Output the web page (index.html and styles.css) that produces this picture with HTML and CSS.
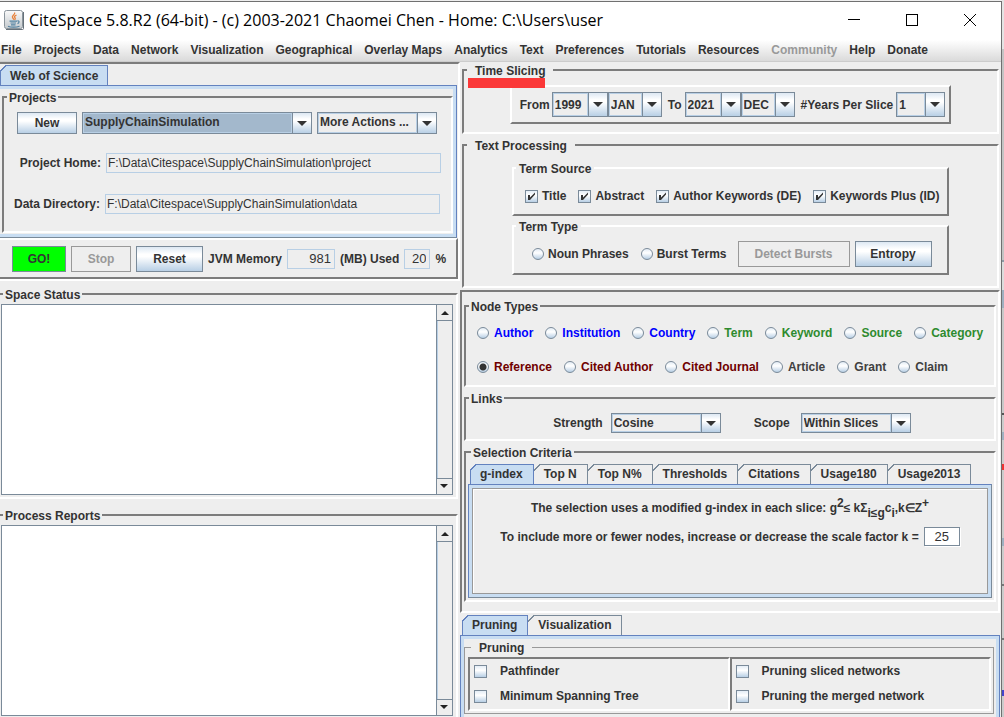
FILE: index.html
```html
<!DOCTYPE html>
<html lang="en">
<head>
<meta charset="utf-8">
<title>CiteSpace 5.8.R2 (64-bit)</title>
<link rel="stylesheet" href="styles.css">
</head>
<body>
<div class="window">
  <header class="titlebar">
    <svg class="app-icon" width="20" height="20" viewBox="0 0 20 20" aria-hidden="true">
      <defs><linearGradient id="tile" x1="0" y1="0" x2="0" y2="1"><stop offset="0" stop-color="#fafafa"/><stop offset="1" stop-color="#c4cace"/></linearGradient></defs>
      <rect x=".5" y=".5" width="18" height="18" rx="2" fill="url(#tile)" stroke="#8b959c"/>
      <path d="M19.5 2v16.500q0 1-1 1H2" fill="none" stroke="#66717a"/>
      <path d="M10.500 2.500c1.500 2-3.200 3-2 5 .5.900 1.500 1.200 1 2.300M12.500 5c-2 1-2.600 1.800-1.600 2.800.7.700.3 1.500-.4 2" fill="none" stroke="#e8813a" stroke-width="1.300"/>
      <path d="M5.500 11.200h7.500M6.500 13h5.500M7 14.800h4.500M4 16.200c2.500 1.200 8.500 1.200 11.500 0M13.300 11c2.200-.6 2.400 1.800.2 2.600" fill="none" stroke="#5382a1" stroke-width="1.200"/>
    </svg>
    <h1 class="title">CiteSpace 5.8.R2 (64-bit) - (c) 2003-2021 Chaomei Chen - Home: C:\Users\user</h1>
    <div class="window-buttons">
      <button class="window-button" aria-label="Minimize"><svg width="12" height="12"><path d="M0 5.500h12" stroke="#000"/></svg></button>
      <button class="window-button" aria-label="Maximize"><svg width="12" height="12"><rect x=".5" y=".5" width="11" height="11" fill="none" stroke="#000"/></svg></button>
      <button class="window-button" aria-label="Close"><svg width="12" height="12"><path d="M0 0l12 12M12 0L0 12" stroke="#000"/></svg></button>
    </div>
  </header>
  <nav class="menubar">
    <button>File</button><button>Projects</button><button>Data</button><button>Network</button><button>Visualization</button><button>Geographical</button><button>Overlay Maps</button><button>Analytics</button><button>Text</button><button>Preferences</button><button>Tutorials</button><button>Resources</button><button disabled>Community</button><button>Help</button><button>Donate</button>
  </nav>
  <main class="content">
    <section class="left">
      <div class="source-panel">
        <div class="tabs" role="tablist"><button class="tab active" role="tab">Web of Science</button></div>
        <div class="tab-body">
          <fieldset class="group projects">
            <legend>Projects</legend>
            <div class="project-actions">
              <button class="button new">New</button>
              <select class="combo project-select" aria-label="Project"><option>SupplyChainSimulation</option></select>
              <select class="combo more-select" aria-label="More actions"><option>More Actions ...</option></select>
            </div>
            <div class="path-row"><label for="home">Project Home:</label><input class="field" id="home" readonly value="F:\Data\Citespace\SupplyChainSimulation\project"></div>
            <div class="path-row"><label for="dir">Data Directory:</label><input class="field" id="dir" readonly value="F:\Data\Citespace\SupplyChainSimulation\data"></div>
          </fieldset>
        </div>
        <div class="run-bar">
          <button class="button go">GO!</button>
          <button class="button stop" disabled>Stop</button>
          <button class="button reset">Reset</button>
          <label for="mem">JVM Memory</label><input class="field num mem" id="mem" readonly value="981">
          <label for="used">(MB) Used</label><input class="field num used" id="used" readonly value="20"><span>%</span>
        </div>
      </div>
      <fieldset class="group log">
        <legend>Space Status</legend>
        <div class="log-box">
          <textarea aria-label="Space Status"></textarea>
          <div class="scrollbar"><button class="arrow up" aria-label="Scroll up"></button><button class="arrow down" aria-label="Scroll down"></button></div>
        </div>
      </fieldset>
      <fieldset class="group log">
        <legend>Process Reports</legend>
        <div class="log-box">
          <textarea aria-label="Process Reports"></textarea>
          <div class="scrollbar"><button class="arrow up" aria-label="Scroll up"></button><button class="arrow down" aria-label="Scroll down"></button></div>
        </div>
      </fieldset>
    </section>
    <section class="right">
      <fieldset class="group wide-legend time">
        <legend><span class="marked">Time Slicing</span></legend>
        <div class="slice-bar">
          <span class="lead">From</span>
          <select class="combo year" aria-label="From year"><option>1999</option></select>
          <select class="combo month" aria-label="From month"><option>JAN</option></select>
          <span class="mid">To</span>
          <select class="combo year" aria-label="To year"><option>2021</option></select>
          <select class="combo month" aria-label="To month"><option>DEC</option></select>
          <label class="mid" for="per">#Years Per Slice</label>
          <select class="combo per" id="per"><option>1</option></select>
        </div>
      </fieldset>
      <fieldset class="group wide-legend text-processing">
        <legend>Text Processing</legend>
        <fieldset class="group raised term-source">
          <legend>Term Source</legend>
          <div class="choices">
            <label><input type="checkbox" checked>Title</label>
            <label><input type="checkbox" checked>Abstract</label>
            <label><input type="checkbox" checked>Author Keywords (DE)</label>
            <label><input type="checkbox" checked>Keywords Plus (ID)</label>
          </div>
        </fieldset>
        <fieldset class="group raised term-type">
          <legend>Term Type</legend>
          <div class="type-row">
            <div class="choices">
              <label><input type="radio" name="type">Noun Phrases</label>
              <label><input type="radio" name="type">Burst Terms</label>
            </div>
            <button class="button detect" disabled>Detect Bursts</button>
            <button class="button entropy">Entropy</button>
          </div>
        </fieldset>
      </fieldset>
      <div class="network-panel">
        <fieldset class="group nodes">
          <legend>Node Types</legend>
          <div class="choices">
            <label class="blue"><input type="radio" name="node">Author</label>
            <label class="blue"><input type="radio" name="node">Institution</label>
            <label class="blue"><input type="radio" name="node">Country</label>
            <label class="green"><input type="radio" name="node">Term</label>
            <label class="green"><input type="radio" name="node">Keyword</label>
            <label class="green"><input type="radio" name="node">Source</label>
            <label class="green"><input type="radio" name="node">Category</label>
          </div>
          <div class="choices">
            <label class="maroon"><input type="radio" name="node" checked>Reference</label>
            <label class="maroon"><input type="radio" name="node">Cited Author</label>
            <label class="maroon"><input type="radio" name="node">Cited Journal</label>
            <label class="gray"><input type="radio" name="node">Article</label>
            <label class="gray"><input type="radio" name="node">Grant</label>
            <label class="gray"><input type="radio" name="node">Claim</label>
          </div>
        </fieldset>
        <fieldset class="group links">
          <legend>Links</legend>
          <div class="links-row">
            <div class="pair"><label for="strength">Strength</label><select class="combo" id="strength"><option>Cosine</option></select></div>
            <div class="pair scope"><label for="scope">Scope</label><select class="combo" id="scope"><option>Within Slices</option></select></div>
          </div>
        </fieldset>
        <fieldset class="group criteria">
          <legend>Selection Criteria</legend>
          <div class="tabs" role="tablist">
            <button class="tab active" role="tab">g-index</button><button class="tab" role="tab">Top N</button><button class="tab" role="tab">Top N%</button><button class="tab" role="tab">Thresholds</button><button class="tab" role="tab">Citations</button><button class="tab" role="tab">Usage180</button><button class="tab" role="tab">Usage2013</button>
          </div>
          <div class="tab-body criteria-body">
            <div class="criteria-inner">
              <p class="formula">The selection uses a modified g-index in each slice: g<sup>2</sup>≤ kΣ<sub>i≤g</sub>c<sub>i</sub>,k∈Z<sup>+</sup></p>
              <p class="factor"><label for="k">To include more or fewer nodes, increase or decrease the scale factor k =</label><input class="k" id="k" value="25"></p>
            </div>
          </div>
        </fieldset>
      </div>
      <div class="pruning-panel">
        <div class="tabs" role="tablist"><button class="tab active" role="tab">Pruning</button><button class="tab" role="tab">Visualization</button></div>
        <div class="tab-body pruning-body">
          <fieldset class="group etched wide-legend">
            <legend>Pruning</legend>
            <div class="pruning-grid">
              <div class="pruning-cell">
                <label><input type="checkbox">Pathfinder</label>
                <label><input type="checkbox">Minimum Spanning Tree</label>
              </div>
              <div class="pruning-cell">
                <label><input type="checkbox">Pruning sliced networks</label>
                <label><input type="checkbox">Pruning the merged network</label>
              </div>
            </div>
          </fieldset>
        </div>
      </div>
    </section>
  </main>
</div>
<div class="backdrop"></div>
</body>
</html>
```
FILE: styles.css
```css
* { box-sizing: border-box; }

:root {
  --face: #eee;
  --line: #7a8a99;
  --blue-line: #6382bf;
  --soft: #b8cfe5;
  --tab: #c8ddf2;
  --shade: #7c7c7c;
  --steel: linear-gradient(#dde8f3 0, #fff 30%, #fff 40%, #b8cfe5 100%);
}

body {
  display: flex;
  height: 100vh;
  margin: 0;
  overflow: hidden;
  background: var(--face);
  color: #333;
  font: bold 12px/14px "Liberation Sans", Arial, sans-serif;
}

button, input, select, textarea { font: inherit; color: inherit; margin: 0; border-radius: 0; }
p { margin: 0; }

.window {
  display: flex;
  flex: 1;
  flex-direction: column;
  min-width: 0;
  border-top: 1px solid #707070;
  border-right: 1px solid #707070;
  margin-top: 1px;
}

.backdrop {
  width: 2px;
  background: linear-gradient(#e4e4e4 0 49px, #c4c4c4 49px 260px, #8d9aa5 260px 262px, #dcdcdc 262px 290px, #9fb0c0 290px 308px, #c8c8c8 308px 413px, #555 413px 415px, #ccc 415px 432px, #9fb0c0 432px 440px, #ccc 440px 464px, #e33 464px 470px, #ccc 470px 538px, #9fb0c0 538px 546px, #ccc 546px 584px, #777 584px 586px, #ccc 586px 638px, #777 638px 640px, #ccc 640px 690px, #44c 690px 696px, #ccc 696px 100%);
}

/* Title bar and menus */
.titlebar {
  display: flex;
  align-items: center;
  height: 38px;
  padding: 0 2px 2px 4px;
  background: #fff;
}
.app-icon { flex: none; }
.title {
  flex: 1;
  margin: 0 0 0 5px;
  color: #000;
  font: 16px/20px "Open Sans", sans-serif;
  white-space: nowrap;
}
.window-buttons { display: flex; }
.window-button {
  display: flex;
  align-items: center;
  justify-content: center;
  width: 58px;
  height: 36px;
  padding: 0;
  border: 0;
  background: none;
}
.menubar {
  display: flex;
  gap: 12px;
  height: 22px;
  padding: 0 1px 2px;
  border-bottom: 1px solid #ccc;
  background: linear-gradient(#fff, #dadada);
}
.menubar button { padding: 0; border: 0; background: none; white-space: nowrap; }
.menubar button:disabled { color: #999; }

/* Shared controls */
.button {
  flex: none;
  height: 26px;
  padding: 0;
  border: 1px solid var(--line);
  background: var(--steel);
}
.button:disabled { border-color: #999; background: var(--face); color: #999; }

.combo {
  appearance: none;
  flex: none;
  height: 20px;
  padding: 0 18px 0 2px;
  border: 1px solid var(--line);
  outline: 0;
  background:
    url("data:image/svg+xml,%3Csvg xmlns='http://www.w3.org/2000/svg' width='10' height='5'%3E%3Cpath d='M0 0h10L5 5z' fill='%23333'/%3E%3C/svg%3E") right 4px center no-repeat,
    linear-gradient(var(--line), var(--line)) right 18px top / 1px 100% no-repeat,
    var(--steel) right top / 18px 100% no-repeat,
    linear-gradient(var(--fill, #eee), var(--fill, #eee)) 1px 1px / calc(100% - 21px) calc(100% - 2px) no-repeat,
    var(--soft);
}

.field {
  height: 20px;
  min-width: 0;
  padding: 0 1px;
  border: 1px solid var(--soft);
  outline: 0;
  background: var(--face);
  font-weight: normal;
}
.num { text-align: right; padding-right: 3px; font-size: 13px; }

input[type="checkbox"], input[type="radio"] {
  appearance: none;
  flex: none;
  width: 13px;
  height: 13px;
  border: 1px solid var(--line);
  background: linear-gradient(#e4edf6, #fff 40%, #b8cfe5);
}
input[type="radio"] { width: 12px; height: 12px; border-radius: 50%; }
input[type="checkbox"]:checked {
  background:
    url("data:image/svg+xml,%3Csvg xmlns='http://www.w3.org/2000/svg' width='11' height='11'%3E%3Cpath d='M2 4h2v2.500L9 1.500v2L4 9H2z' fill='%23333'/%3E%3C/svg%3E") center no-repeat,
    linear-gradient(#e4edf6, #fff 40%, #b8cfe5);
}
input[type="radio"]:checked { background: radial-gradient(#333 0 3px, transparent 4px), linear-gradient(#e4edf6, #fff 40%, #b8cfe5); }

.group {
  min-width: 0;
  margin: 0;
  padding: 0;
  border: 2px solid;
  border-color: var(--shade) #fff #fff var(--shade);
}
.group > legend { margin-left: 3px; padding: 2px 2px 0; }
.wide-legend > legend { padding: 2px 8px 0; }
.raised { border-color: #fff var(--shade) var(--shade) #fff; }
.etched { border: 1px solid #999; }

.choices { display: flex; gap: 12px; white-space: nowrap; }
.choices label { display: flex; align-items: center; gap: 4px; }
.blue { color: #00f; }
.green { color: #2e8b2e; }
.maroon { color: #700000; }
.gray { color: #404040; }

/* Tabs */
.tabs { display: flex; }
.tab {
  --edge: var(--line);
  --surface: var(--face);
  height: 20px;
  padding: 0 11px 0 10px;
  border: 0;
  background:
    linear-gradient(135deg, var(--face) 0 4px, var(--edge) 4px 5px, transparent 5px) 0 0 / 7px 7px no-repeat,
    linear-gradient(var(--edge), var(--edge)) 0 0 / 100% 1px no-repeat,
    linear-gradient(var(--edge), var(--edge)) 100% 0 / 1px 100% no-repeat,
    var(--surface);
  white-space: nowrap;
}
.tab.active {
  --edge: var(--blue-line);
  --surface: var(--tab);
  background:
    linear-gradient(135deg, var(--face) 0 4px, var(--edge) 4px 5px, transparent 5px) 0 0 / 7px 7px no-repeat,
    linear-gradient(var(--edge), var(--edge)) 0 0 / 100% 1px no-repeat,
    linear-gradient(var(--edge), var(--edge)) 0 0 / 1px 100% no-repeat,
    linear-gradient(var(--edge), var(--edge)) 100% 0 / 1px 100% no-repeat,
    var(--surface);
}
.tab-body {
  padding: 3px;
  border: 1px solid var(--blue-line);
  background: linear-gradient(var(--face), var(--face)) content-box, var(--tab);
}

/* Columns */
.content {
  display: grid;
  flex: 1;
  grid-template-columns: 460fr 541fr;
  min-height: 0;
}
.left, .right { display: flex; flex-direction: column; min-width: 0; }

.source-panel {
  border: 2px solid;
  border-color: var(--shade) #fff #fff;
  border-left: 0;
  padding-top: 1px;
}
.source-panel .tab { padding: 1px 10px 0; }
.source-panel .tab-body { padding-left: 0; border-left: 0; border-bottom-color: var(--line); margin-right: 1px; }
.projects { height: 144px; margin: 0 0 1px 2px; }
.project-actions { display: flex; gap: 5px; padding: 7px 14px 0 13px; }
.project-actions .button, .project-actions .combo { height: 22px; }
.new { width: 60px; }
.project-select { --fill: #a3b8cc; flex: 1; min-width: 0; padding-bottom: 2px; }
.more-select { width: 120px; padding-bottom: 2px; }
.path-row { display: flex; align-items: center; gap: 5px; padding: 19px 10px 0 13px; }
.path-row + .path-row { padding: 21px 11px 0 9px; }
.path-row .field { flex: 1; }
.path-row label { width: 84px; text-align: right; white-space: nowrap; }
.path-row + .path-row label { width: 87px; }

.run-bar {
  display: flex;
  align-items: center;
  gap: 5px;
  height: 41px;
  padding-left: 12px;
  border: 2px solid;
  border-color: #fff var(--shade) var(--shade);
  border-left: 0;
  white-space: nowrap;
}
.go { width: 54px; background: #0f0; }
.stop { width: 60px; }
.reset { width: 67px; }
.mem { width: 48px; }
.used { width: 26px; }

.log {
  display: flex;
  flex: 1;
  flex-direction: column;
  margin-top: 5px;
  border-left: 0;
  margin-right: 2px;
}
.log + .log { margin-top: 8px; }
.log > legend { margin-left: 3px; }
.log-box {
  display: flex;
  flex: 1;
  height: 100%;
  margin: 2px 3px 2px 1px;
  border: 1px solid var(--line);
  background: #fff;
}
.log textarea { flex: 1; padding: 2px; border: 0; outline: 0; resize: none; font-weight: normal; }
.scrollbar {
  display: flex;
  flex-direction: column;
  justify-content: space-between;
  width: 16px;
  border-left: 1px solid var(--line);
  background: var(--face);
  box-shadow: inset 1px 0 var(--soft);
}
.arrow {
  height: 16px;
  padding: 0;
  border: 0 solid var(--line);
  background: var(--face) url("data:image/svg+xml,%3Csvg xmlns='http://www.w3.org/2000/svg' width='8' height='4'%3E%3Cpath d='M0 4h8L4 0z' fill='%23222'/%3E%3C/svg%3E") center no-repeat;
}
.up { border-bottom-width: 1px; }
.down { border-bottom-width: 1px; transform: rotate(180deg); }

/* Right column */
.right { padding-right: 1px; }
.time { height: 72px; margin: 0 1px 0 2px; }
.marked { position: relative; }
.marked::after {
  content: "";
  position: absolute;
  top: 14px;
  left: -7px;
  right: 0;
  height: 10px;
  background: #fb3838;
}
.slice-bar {
  display: flex;
  align-items: center;
  width: max-content;
  height: 39px;
  margin: 7px auto 0;
  padding: 0 4px 0 8px;
  border: 2px solid;
  border-color: #fff var(--shade) var(--shade) #fff;
  white-space: nowrap;
}
.slice-bar .combo { height: 25px; }
.lead { margin-right: 2px; }
.mid { margin: 0 3px 0 6px; }
.year { width: 56px; }
.month { width: 54px; }
.per { width: 49px; }

.text-processing { margin: 3px 1px 0 2px; height: 151px; }
.raised { width: 437px; margin: 0 auto; }
.raised > legend { margin-left: 2px; padding: 2px 3px 0; }
.term-source { height: 56px; margin-top: 7px; }
.term-source .choices { padding: 13px 0 0 11px; }
.term-type { height: 57px; margin-top: 2px; }
.type-row { display: flex; align-items: center; gap: 5px; padding: 7px 0 0 18px; }
.type-row .choices { margin-right: 6px; }
.detect { width: 112px; }
.entropy { width: 77px; }

.network-panel {
  margin-top: 2px;
  padding: 6px 2px 9px 2px;
  border: 2px solid;
  border-color: var(--shade) #fff #fff var(--shade);
}
.nodes { height: 89px; }
.nodes .choices { padding: 12px 0 0 11px; }
.nodes .choices + .choices { padding-top: 20px; }
.nodes label { gap: 5px; }
.links { height: 51px; margin-top: 3px; }
.links-row { display: flex; gap: 33px; justify-content: center; padding: 7px 0 0 4px; }
.pair { display: flex; align-items: center; gap: 8px; }
.pair .combo { width: 110px; }
.scope { gap: 11px; }
.criteria { margin-top: 3px; padding: 4px 2px 2px; }
.criteria .tabs { padding-left: 2px; }
.criteria-body { border-color: var(--blue-line) var(--line) var(--line) var(--blue-line); }
.criteria-inner { height: 106px; border: 1px solid #999; box-shadow: inset 1px 1px #fff; padding: 10px 0; text-align: center; }
.formula { line-height: 18px; white-space: nowrap; }
sup, sub { font-size: 12px; line-height: 0; }
sub { vertical-align: -5px; }
.factor { display: flex; align-items: center; justify-content: center; gap: 5px; margin-top: 10px; white-space: nowrap; }
.k { width: 36px; height: 19px; padding: 0; border: 1px solid var(--line); outline: 0; background: #fff; box-shadow: 1px 1px #fff; font-size: 13px; font-weight: normal; text-align: center; }

.pruning-panel { margin-top: 2px; }
.pruning-panel .tabs { padding-left: 2px; }
.pruning-body { padding: 3px 3px 2px; }
.pruning-body .group { margin: 0 2px 3px 0; padding: 2px 2px 2px 3px; }
.pruning-grid { display: grid; grid-template-columns: 1fr 1fr; }
.pruning-cell {
  display: flex;
  flex-direction: column;
  gap: 11px;
  padding: 5px 4px 6px;
  border: 2px solid;
  border-color: var(--shade) #fff #fff var(--shade);
}
.pruning-cell label { display: flex; align-items: center; gap: 13px; }
```
